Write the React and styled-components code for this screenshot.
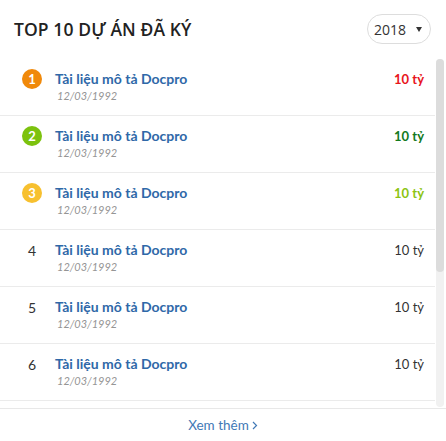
import styled, { createGlobalStyle } from "styled-components";

const GlobalStyle = createGlobalStyle`
  html, body { margin: 0; padding: 0; background: #fff; }
  * { box-sizing: border-box; }
`;

const Card = styled.div`
  width: 446px;
  height: 441px;
  background: #fff;
  display: flex;
  flex-direction: column;
  font-family: "Open Sans", "Liberation Sans", sans-serif;
`;

const Header = styled.div`
  height: 58px;
  display: flex;
  align-items: center;
  justify-content: space-between;
  padding: 0 15px 0 14px;
`;

const Title = styled.h2`
  margin: 0;
  font-size: 17.5px;
  font-weight: 600;
  color: #222;
  letter-spacing: 0.1px;
`;

const YearPicker = styled.div`
  width: 64px;
  height: 30px;
  border: 1px solid #ddd;
  border-radius: 15px;
  display: flex;
  align-items: center;
  justify-content: space-between;
  padding: 0 8px 0 6px;
  font-size: 14px;
  color: #333;
`;

const ListArea = styled.div`
  flex: 1;
  min-height: 0;
  display: flex;
  padding: 1px 2px 1px 0;
`;

const List = styled.div`
  flex: 1;
  overflow-y: auto;
  scrollbar-width: none;
  &::-webkit-scrollbar { display: none; }
`;

const ScrollTrack = styled.div`
  width: 8px;
  margin-left: 1px;
  background: #f1f1f1;
  border-radius: 4px;
  display: flex;
  flex-direction: column;
`;

const ScrollThumb = styled.div`
  height: 213px;
  background: #dcdcdc;
  border-radius: 4px;
`;

const Row = styled.div`
  display: flex;
  align-items: flex-start;
  padding: 11px 11px 11px 22px;
  border-bottom: 1px solid #ebebeb;
`;

const Rank = styled.div`
  width: 20px;
  height: 20px;
  margin-top: -1px;
  border-radius: 50%;
  flex-shrink: 0;
  display: flex;
  align-items: center;
  justify-content: center;
  font-family: "Lato", "Liberation Sans", sans-serif;
  font-size: ${(p) => (p.$color ? "13px" : "14px")};
  font-weight: ${(p) => (p.$color ? 700 : 400)};
  color: ${(p) => (p.$color ? "#fff" : "#333")};
  background: ${(p) => p.$color || "transparent"};
`;

const Info = styled.div`
  flex: 1;
  margin-left: 13px;
  display: flex;
  flex-direction: column;
`;

const DocName = styled.div`
  font-family: "Lato", "Liberation Sans", sans-serif;
  font-size: 14px;
  font-weight: 700;
  line-height: 18px;
  color: #2f68a8;
`;

const DocDate = styled.div`
  font-family: "Lato", "Liberation Sans", sans-serif;
  font-size: 11px;
  font-style: italic;
  line-height: 16px;
  color: #959595;
  padding-left: 2px;
`;

const Amount = styled.div`
  font-family: "Lato", "Liberation Sans", sans-serif;
  font-size: 13px;
  line-height: 18px;
  font-weight: ${(p) => (p.$color ? 700 : 400)};
  color: ${(p) => p.$color || "#333"};
`;

const Footer = styled.div`
  height: 33px;
  border-top: 1px solid #e8e8e8;
  display: flex;
  align-items: center;
  justify-content: center;
  font-family: "Lato", "Liberation Sans", sans-serif;
  font-size: 13.5px;
  color: #4279b6;
  gap: 3px;
`;

const rankColors = ["#f0890a", "#7cc20e", "#f7c02f"];
const amountColors = ["#e8141b", "#137a1e", "#8cc413"];

const items = Array.from({ length: 10 }, (_, i) => ({
  rank: i + 1,
  name: "Tài liệu mô tả Docpro",
  date: "12/03/1992",
  amount: "10 tỷ",
}));

export default function App() {
  return (
    <>
      <GlobalStyle />
      <Card>
        <Header>
          <Title>TOP 10 DỰ ÁN ĐÃ KÝ</Title>
          <YearPicker>
            <span>2018</span>
            <svg width="6" height="5" viewBox="0 0 6 5">
              <path d="M0 0h6L3 5z" fill="#333" />
            </svg>
          </YearPicker>
        </Header>
        <ListArea>
          <List>
            {items.map((item, i) => (
              <Row key={item.rank}>
                <Rank $color={rankColors[i]}>{item.rank}</Rank>
                <Info>
                  <DocName>{item.name}</DocName>
                  <DocDate>{item.date}</DocDate>
                </Info>
                <Amount $color={amountColors[i]}>{item.amount}</Amount>
              </Row>
            ))}
          </List>
          <ScrollTrack>
            <ScrollThumb />
          </ScrollTrack>
        </ListArea>
        <Footer>
          Xem thêm
          <svg width="6" height="9" viewBox="0 0 6 9">
            <path d="M1 1l3.5 3.5L1 8" stroke="#4279b6" strokeWidth="1.2" fill="none" />
          </svg>
        </Footer>
      </Card>
    </>
  );
}
